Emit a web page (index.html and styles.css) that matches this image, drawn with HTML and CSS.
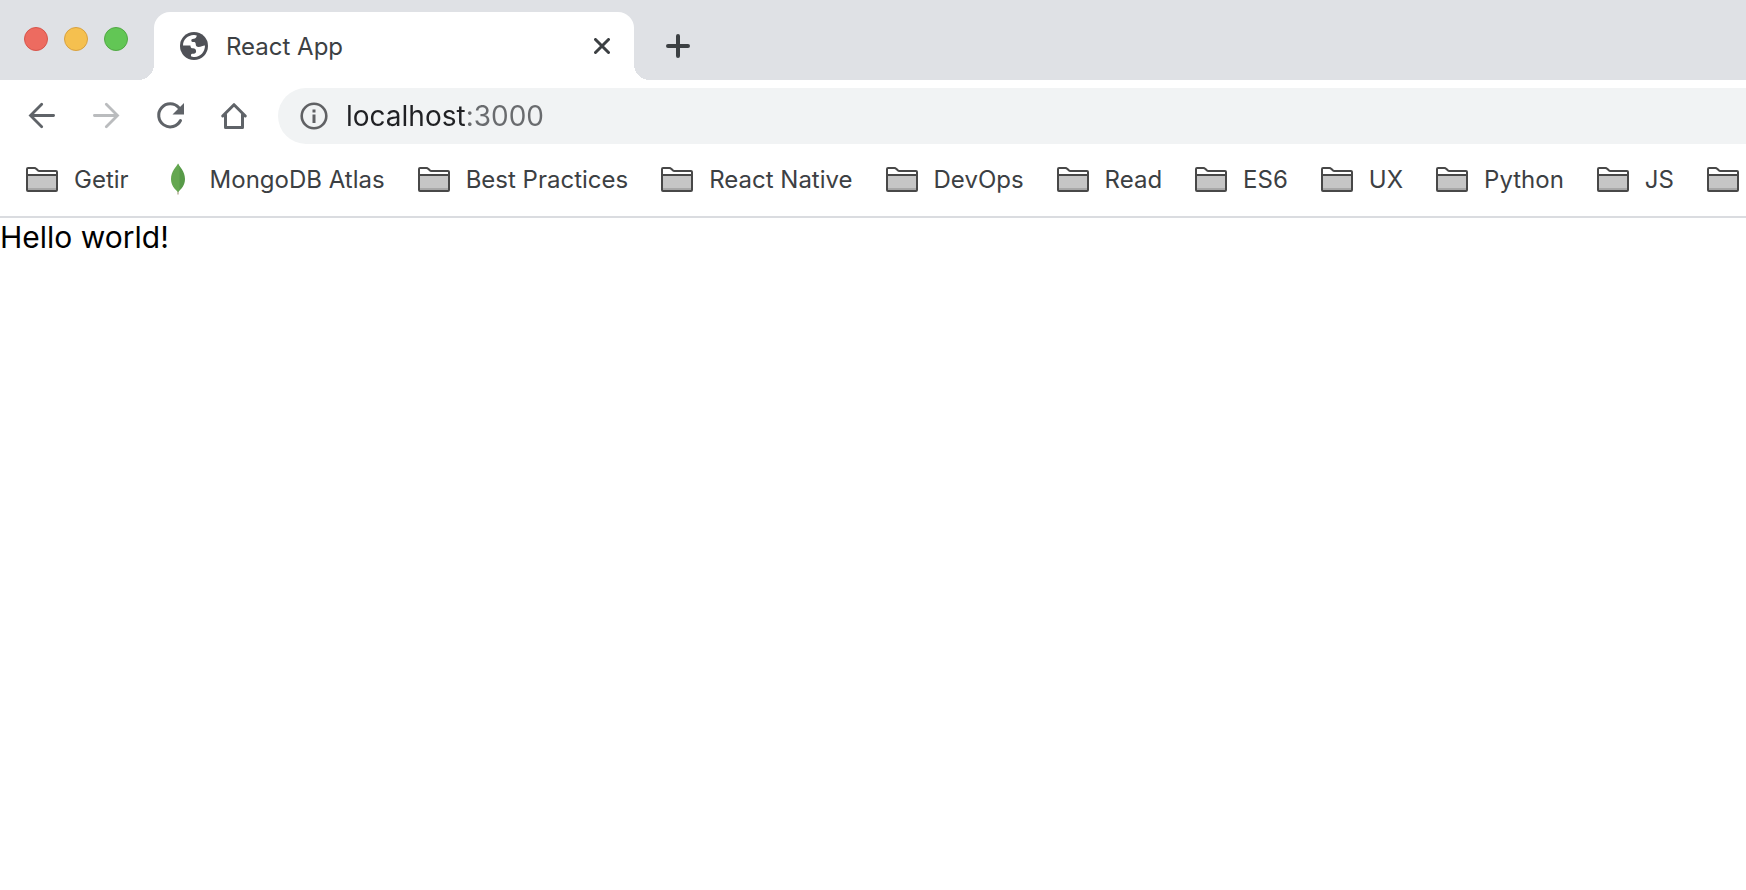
FILE: index.html
```html
<!DOCTYPE html>
<html lang="en">
<head>
<meta charset="utf-8">
<title>React App</title>
<link rel="stylesheet" href="styles.css">
</head>
<body>
<svg class="sprite" aria-hidden="true">
  <symbol id="folder" viewBox="0 0 32 26">
    <path d="M2 9h28v15H2z" fill="#c6c6c6"/>
    <path d="M2 22h28v2H2z" fill="#a8a8a8"/>
    <path d="M1 24V3q0-1 1-1h6.500q1 0 1.700 .8l1.600 1.500q.6 .7 1.600 .7H30q1 0 1 1v18q0 1-1 1H2q-1 0-1-1zM1 9h30" fill="none" stroke="#484848" stroke-width="2"/>
  </symbol>
</svg>
<header class="browser">
  <div class="tabstrip">
    <div class="lights">
      <button class="light red" aria-label="Close window"></button>
      <button class="light yellow" aria-label="Minimize window"></button>
      <button class="light green" aria-label="Zoom window"></button>
    </div>
    <div class="tab">
      <svg class="globe" viewBox="0 0 28 28" aria-hidden="true">
        <circle cx="14" cy="14" r="14" fill="#4f5157"/>
        <path d="M3 13.500C3 7.500 8 3.200 13.500 3c1.300 0 2.500 .2 3.200 .5C16.700 5.500 15.500 6.600 13.700 6.700c-1.700 .1-2.400 .8-2.400 1.800 0 1.200 1 1.600 2.200 1.600 1.500 0 2.200 .6 2.200 1.900 0 1.900 1 3 2.900 3 2.600 0 4-1.500 6.400-1.500C25 20 20 25.200 14.500 25c-1.500 0-3-.3-3.500-.7v-1.300c0-1 .8-1.300 1.700-1.300h1c1.500 0 2.400-.9 2.400-2.400 0-2-1.300-3-3.100-3-1.700 0-2.500-.7-2.600-2.800z" fill="#fff"/>
      </svg>
      <span class="tab-title">React App</span>
      <button class="tab-close" aria-label="Close tab">
        <svg viewBox="0 0 16 16"><path d="M1.500 1.500l13 13M14.500 1.500l-13 13" fill="none" stroke="#3c4043" stroke-width="3" stroke-linecap="round"/></svg>
      </button>
    </div>
    <button class="new-tab" aria-label="New tab">
      <svg viewBox="0 0 24 24"><path d="M12 2v20M2 12h20" fill="none" stroke="#3c4043" stroke-width="4" stroke-linecap="round"/></svg>
    </button>
  </div>
  <nav class="toolbar" aria-label="Navigation">
    <button class="tool" aria-label="Back">
      <svg viewBox="0 0 28 28"><path d="M25.600 13.500H3M13.700 2.300L2.500 13.500l11.200 11.200" fill="none" stroke="#5f6368" stroke-width="2.800" stroke-linecap="round"/></svg>
    </button>
    <button class="tool" aria-label="Forward" disabled>
      <svg viewBox="0 0 28 28"><path d="M2.400 13.500H25M14.300 2.300l11.200 11.200-11.200 11.200" fill="none" stroke="#babcbe" stroke-width="2.800" stroke-linecap="round"/></svg>
    </button>
    <button class="tool" aria-label="Reload">
      <svg viewBox="0 0 28 28"><path d="M22.900 5.800A11.500 11.500 0 1 0 24.500 18.500" fill="none" stroke="#5f6368" stroke-width="3" stroke-linecap="round"/><path d="M28 1V12.500H16.500z" fill="#5f6368"/></svg>
    </button>
    <button class="tool" aria-label="Home">
      <svg viewBox="0 0 28 28"><path d="M2.700 14L14 2.700 25.300 14M5.500 12.500v13h17v-13" fill="none" stroke="#5f6368" stroke-width="3" stroke-linecap="round" stroke-linejoin="round"/></svg>
    </button>
    <div class="omnibox">
      <svg class="info" viewBox="0 0 28 28" aria-hidden="true"><circle cx="14" cy="14" r="12.300" fill="none" stroke="#606164" stroke-width="2.600"/><path d="M12.500 7.500h3v3h-3zM12.500 12.500h3V21h-3z" fill="#606164"/></svg>
      <input class="address" type="text" value="localhost:3000" aria-label="Address" spellcheck="false">
    </div>
  </nav>
  <nav class="bookmarks" aria-label="Bookmarks">
    <a class="bookmark" href="#"><svg class="folder"><use href="#folder"/></svg>Getir</a>
    <a class="bookmark" href="#"><svg class="leaf" viewBox="0 0 32 32"><path d="M16 28v3.500" stroke="#b9b09a" stroke-width="1.500"/><path d="M16 .5C17.500 4 23 8 23 16c0 6-3.500 10-7 13z" fill="#579a48"/><path d="M16 .5C14.500 4 9 8 9 16c0 6 3.500 10 7 13l1.500-2V4z" fill="#64a750"/></svg>MongoDB Atlas</a>
    <a class="bookmark" href="#"><svg class="folder"><use href="#folder"/></svg>Best Practices</a>
    <a class="bookmark" href="#"><svg class="folder"><use href="#folder"/></svg>React Native</a>
    <a class="bookmark" href="#"><svg class="folder"><use href="#folder"/></svg>DevOps</a>
    <a class="bookmark" href="#"><svg class="folder"><use href="#folder"/></svg>Read</a>
    <a class="bookmark" href="#"><svg class="folder"><use href="#folder"/></svg>ES6</a>
    <a class="bookmark" href="#"><svg class="folder"><use href="#folder"/></svg>UX</a>
    <a class="bookmark" href="#"><svg class="folder"><use href="#folder"/></svg>Python</a>
    <a class="bookmark" href="#"><svg class="folder"><use href="#folder"/></svg>JS</a>
    <a class="bookmark" href="#" aria-label="More bookmarks"><svg class="folder"><use href="#folder"/></svg></a>
  </nav>
</header>
<main class="page">Hello world!</main>
</body>
</html>
```

FILE: styles.css
```css
* {
  box-sizing: border-box;
}

body {
  margin: 0;
  background: #fff;
  color: #3c4043;
  font-family: Inter, "Liberation Sans", sans-serif;
  font-size: 24px;
  overflow-x: hidden;
}

button {
  display: flex;
  align-items: center;
  justify-content: center;
  margin: 0;
  padding: 0;
  border: 0;
  background: none;
}

svg {
  display: block;
  flex: none;
}

.sprite {
  position: absolute;
  width: 0;
  height: 0;
}

.tabstrip {
  display: flex;
  height: 80px;
  padding: 12px 0 0 24px;
  background: #dfe1e5;
}

.lights {
  display: flex;
  gap: 16px;
  width: 130px;
  padding-top: 15px;
}

.light {
  width: 24px;
  height: 24px;
  border: 1px solid;
  border-radius: 50%;
}

.red {
  background: #ed6b60;
  border-color: #d7554b;
}

.yellow {
  background: #f5c04f;
  border-color: #d8a140;
}

.green {
  background: #62c655;
  border-color: #51a844;
}

.tab {
  position: relative;
  display: flex;
  align-items: center;
  width: 480px;
  padding: 0 24px 0 26px;
  border-radius: 16px 16px 0 0;
  background: #fff;
}

.tab::before,
.tab::after {
  content: "";
  position: absolute;
  bottom: 0;
  width: 16px;
  height: 16px;
}

.tab::before {
  right: 100%;
  background: radial-gradient(circle at 0 0, transparent 16px, #fff 16px);
}

.tab::after {
  left: 100%;
  background: radial-gradient(circle at 100% 0, transparent 16px, #fff 16px);
}

.globe {
  width: 28px;
  height: 28px;
}

.tab-title {
  flex: 1;
  padding-left: 18px;
}

.tab-close svg {
  width: 16px;
  height: 16px;
}

.new-tab {
  width: 88px;
}

.new-tab svg {
  width: 24px;
  height: 24px;
}

.toolbar {
  display: flex;
  align-items: center;
  height: 72px;
  padding-left: 10px;
}

.tool {
  width: 64px;
  height: 56px;
}

.tool svg {
  width: 28px;
  height: 28px;
}

.omnibox {
  display: flex;
  flex: 1;
  align-items: center;
  gap: 18px;
  height: 56px;
  margin-left: 12px;
  padding-left: 22px;
  border-radius: 28px 0 0 28px;
  background: #f1f3f4;
}

.info {
  width: 28px;
  height: 28px;
}

.address {
  flex: 1;
  min-width: 0;
  padding: 0;
  border: 0;
  outline: 0;
  background: linear-gradient(90deg, #202124 120px, #696b6e 120px);
  background-clip: text;
  color: transparent;
  font: inherit;
  font-size: 28px;
}

.bookmarks {
  display: flex;
  gap: 33px;
  height: 66px;
  padding: 11px 0 0 26px;
  border-bottom: 2px solid #dadce0;
  overflow: hidden;
}

.bookmark {
  display: flex;
  flex: none;
  align-items: center;
  gap: 16px;
  height: 32px;
  color: inherit;
  text-decoration: none;
  white-space: nowrap;
}

.folder {
  width: 32px;
  height: 26px;
}

.leaf {
  width: 32px;
  height: 32px;
}

.page {
  color: #000;
  font-size: 30px;
  line-height: 38px;
}
```
